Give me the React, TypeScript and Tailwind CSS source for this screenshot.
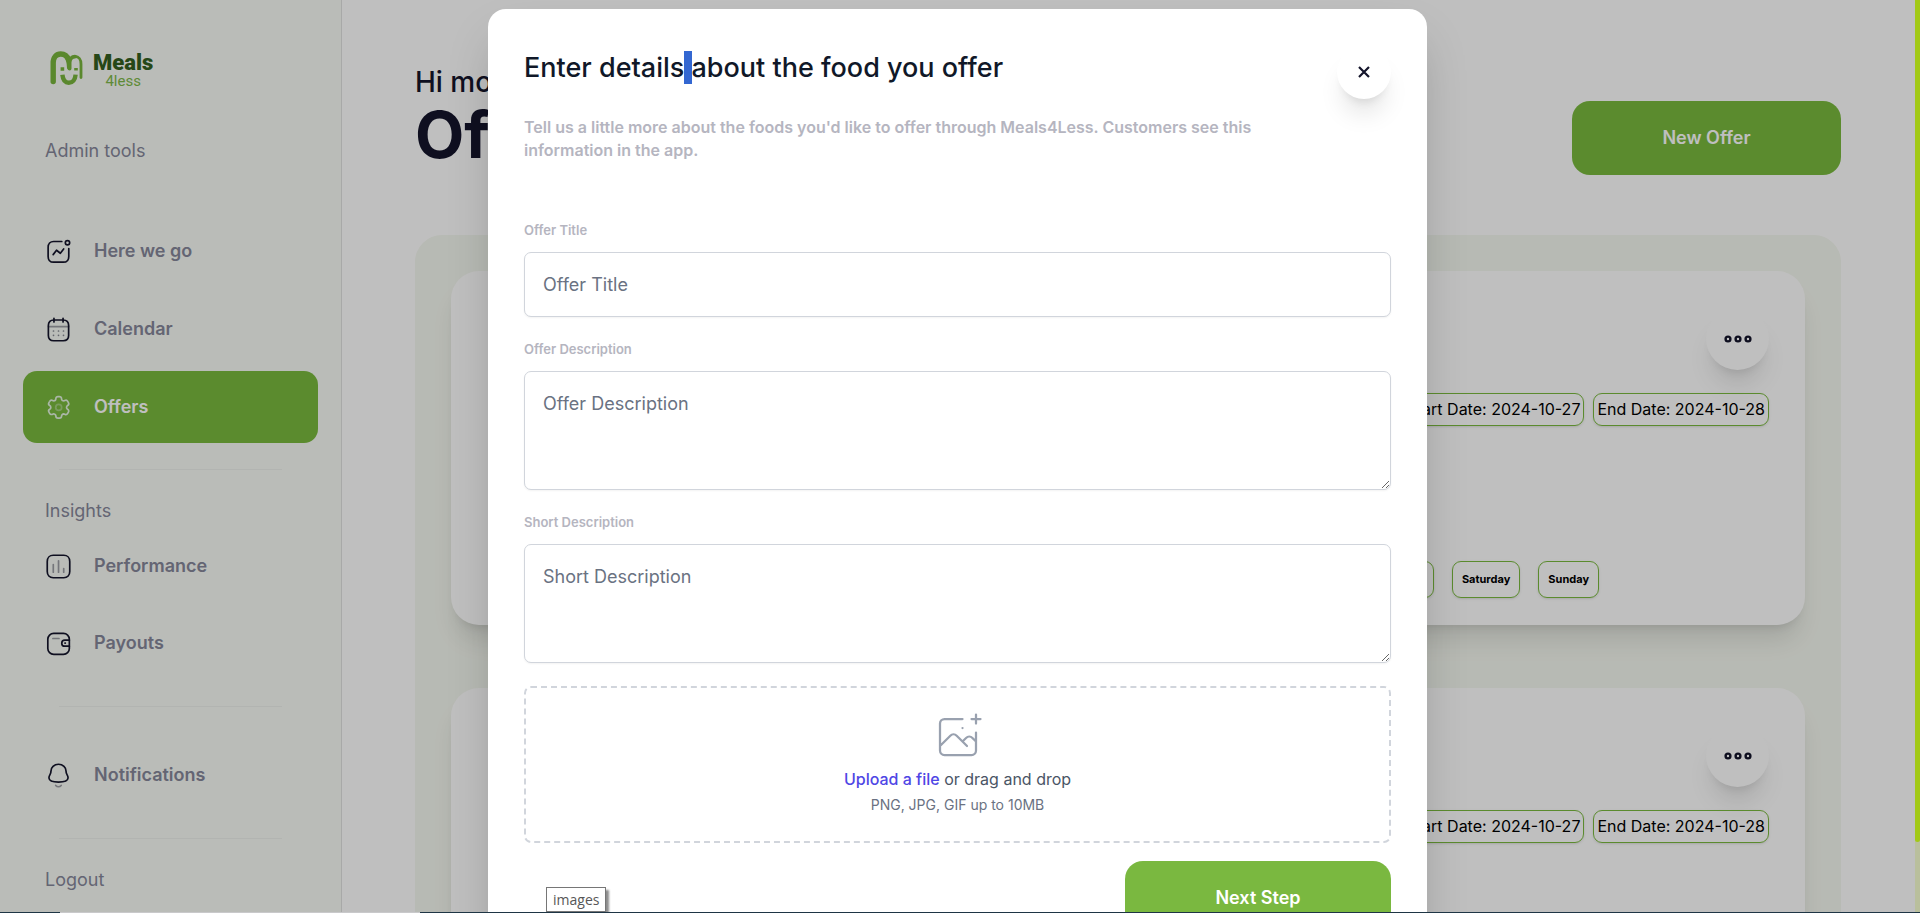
import type { ReactNode } from 'react';

interface NavItemProps {
  label: string;
  icon: ReactNode;
  active?: boolean;
}

const days = ['Friday', 'Saturday', 'Sunday'];

const offers = [
  { id: 1, start: '2024-10-27', end: '2024-10-28' },
  { id: 2, start: '2024-10-27', end: '2024-10-28' },
];

function Icon({ children }: { children: ReactNode }) {
  return (
    <svg
      className="h-[27px] w-[27px] shrink-0"
      viewBox="0 0 24 24"
      fill="none"
      stroke="currentColor"
      strokeWidth="1.5"
      strokeLinecap="round"
      strokeLinejoin="round"
      aria-hidden="true"
    >
      {children}
    </svg>
  );
}

const ActivityIcon = () => (
  <Icon>
    <path d="M7.245 14.781L10.238 10.891L13.652 13.573L16.581 9.793" />
    <circle cx="19.995" cy="4.2" r="1.922" />
    <path d="M14.925 3.12H7.657C4.645 3.12 2.778 5.253 2.778 8.265V16.347C2.778 19.358 4.608 21.482 7.657 21.482H16.261C19.273 21.482 21.141 19.358 21.141 16.347V9.308" />
  </Icon>
);

const CalendarIcon = () => (
  <Icon>
    <path opacity="0.4" d="M3.093 9.404H20.918" />
    <path
      opacity="0.5"
      d="M16.442 13.31H16.451M12.005 13.31H12.014M7.558 13.31H7.567M16.442 17.196H16.451M12.005 17.196H12.014M7.558 17.196H7.567"
    />
    <path d="M16.044 2V5.291M7.966 2V5.291" />
    <path d="M16.238 3.58H7.771C4.834 3.58 3 5.215 3 8.222V17.272C3 20.326 4.834 22 7.771 22H16.229C19.175 22 21 20.355 21 17.348V8.222C21.009 5.215 19.184 3.58 16.238 3.58Z" />
  </Icon>
);

const SettingIcon = () => (
  <Icon>
    <path d="M20.807 7.624L20.184 6.543C19.657 5.628 18.488 5.312 17.572 5.837C17.136 6.094 16.616 6.167 16.126 6.04C15.636 5.913 15.217 5.596 14.961 5.16C14.796 4.883 14.708 4.567 14.704 4.244C14.719 3.728 14.524 3.227 14.163 2.856C13.803 2.486 13.308 2.277 12.79 2.277H11.535C11.028 2.277 10.542 2.479 10.184 2.838C9.826 3.198 9.626 3.685 9.629 4.192C9.613 5.24 8.759 6.081 7.711 6.081C7.388 6.078 7.072 5.989 6.794 5.824C5.879 5.3 4.711 5.616 4.183 6.531L3.515 7.624C2.988 8.538 3.3 9.706 4.211 10.236C4.804 10.578 5.169 11.211 5.169 11.895C5.169 12.579 4.804 13.212 4.211 13.554C3.301 14.081 2.988 15.246 3.515 16.156L4.147 17.246C4.395 17.693 4.811 18.023 5.303 18.163C5.795 18.302 6.322 18.241 6.769 17.991C7.208 17.735 7.731 17.665 8.222 17.796C8.713 17.927 9.131 18.249 9.383 18.69C9.549 18.969 9.638 19.285 9.641 19.609C9.641 20.666 10.498 21.523 11.555 21.523H12.81C13.863 21.523 14.719 20.671 14.724 19.618C14.722 19.109 14.923 18.621 15.282 18.261C15.642 17.902 16.13 17.701 16.638 17.703C16.96 17.712 17.275 17.8 17.555 17.96C18.467 18.486 19.633 18.174 20.163 17.264L20.807 16.156C21.062 15.719 21.132 15.198 21.002 14.709C20.872 14.22 20.552 13.803 20.114 13.551C19.675 13.3 19.355 12.883 19.225 12.393C19.095 11.904 19.166 11.383 19.421 10.946C19.587 10.656 19.827 10.415 20.114 10.252C21.019 9.722 21.33 8.561 20.807 7.652Z" />
    <circle opacity="0.4" cx="12.175" cy="11.889" r="2.636" />
  </Icon>
);

const ChartIcon = () => (
  <Icon>
    <path opacity="0.4" d="M7.371 10.202V17.062M12.038 6.919V17.062M16.629 13.827V17.062" />
    <path d="M16.686 2H7.314C4.048 2 2 4.312 2 7.585V16.415C2 19.688 4.038 22 7.314 22H16.686C19.962 22 22 19.688 22 16.415V7.585C22 4.312 19.962 2 16.686 2Z" />
  </Icon>
);

const WalletIcon = () => (
  <Icon>
    <path d="M21.639 14.396H17.591C16.105 14.395 14.9 13.191 14.899 11.705C14.899 10.218 16.105 9.014 17.591 9.013H21.639M18.049 11.643H17.737" />
    <path d="M7.748 3H16.391C19.29 3 21.639 5.35 21.639 8.248V16.425C21.639 19.323 19.29 21.673 16.391 21.673H7.748C4.85 21.673 2.5 19.323 2.5 16.425V8.248C2.5 5.35 4.85 3 7.748 3Z" />
    <path opacity="0.4" d="M7.036 7.538H12.435" />
  </Icon>
);

const BellIcon = () => (
  <Icon>
    <path d="M12 17.848C17.639 17.848 20.248 17.124 20.5 14.22C20.5 11.317 18.681 11.504 18.681 7.943C18.681 5.161 16.045 1.996 12 1.996S5.32 5.161 5.32 7.943C5.32 11.504 3.5 11.317 3.5 14.22C3.753 17.136 6.362 17.848 12 17.848Z" />
    <path opacity="0.4" d="M14.389 20.857C13.025 22.372 10.897 22.39 9.519 20.857" />
  </Icon>
);

function Logo() {
  return (
    <a href="#" className="flex items-start gap-[10px] pl-[27px]" aria-label="Meals 4less">
      <svg className="h-9 w-[33px]" viewBox="0 0 33 36" fill="none" stroke="#79b63c" strokeLinecap="round">
        <path strokeWidth="5.4" d="M3.2 30.5V12C3.2 6 6.5 3 10.7 3C14.5 3 17.4 5.4 18.6 9" />
        <path strokeWidth="3.8" d="M19.6 17.5V11.5C19.6 8 21.8 5.6 25 5.6" />
        <path strokeWidth="2.8" d="M25 5.4C28.8 5.4 31 8.5 31 13V26.5" />
        <path strokeWidth="3.6" d="M15.5 5C17.8 7.4 18.6 10 18.8 17" />
        <path strokeWidth="4.4" strokeLinecap="butt" d="M12.4 23.8C12.9 29 15.2 31.8 18.8 31.8C22.6 31.8 25.2 28.6 25.6 23.6" />
        <path strokeWidth="3.6" strokeLinecap="butt" d="M12.4 19.8V16.2M26 19.4V17" />
      </svg>
      <span className="flex flex-col items-center font-['Roboto',sans-serif]">
        <span className="text-[22px] leading-6 font-black text-[#335f20]">Meals</span>
        <span className="text-[15px] leading-3 text-[#7fb94a]">4less</span>
      </span>
    </a>
  );
}

function NavItem({ label, icon, active }: NavItemProps) {
  return (
    <a
      href="#"
      className={`flex h-[72px] items-center gap-[22px] rounded-[14px] px-[22px] text-lg font-semibold ${
        active ? 'bg-[#7aba3e] text-white' : 'text-[#86879a]'
      }`}
    >
      <span className={active ? 'text-[#e4f4e0]' : 'text-[#14152b]'}>{icon}</span>
      {label}
    </a>
  );
}

function Sidebar() {
  return (
    <aside className="flex w-[342px] shrink-0 flex-col border-r border-[#e0e2e0] bg-[#f8fbf6] px-[23px] pt-[51px] text-lg text-[#86879a]">
      <Logo />
      <p className="mt-[50px] px-[22px] leading-7">Admin tools</p>
      <nav className="mt-[50px] flex flex-col gap-1.5">
        <NavItem label="Here we go" icon={<ActivityIcon />} />
        <NavItem label="Calendar" icon={<CalendarIcon />} />
        <NavItem label="Offers" icon={<SettingIcon />} active />
      </nav>
      <hr className="mx-9 mt-[26px] border-[#eef1ec]" />
      <p className="mt-[27px] px-[22px] leading-7">Insights</p>
      <nav className="mt-[5px] flex flex-col gap-[5px]">
        <NavItem label="Performance" icon={<ChartIcon />} />
        <NavItem label="Payouts" icon={<WalletIcon />} />
      </nav>
      <hr className="mx-9 mt-[27px] border-[#eef1ec]" />
      <nav className="mt-8">
        <NavItem label="Notifications" icon={<BellIcon />} />
      </nav>
      <hr className="mx-9 mt-[27px] border-[#eef1ec]" />
      <a href="#" className="mt-[27px] px-[22px] leading-7">
        Logout
      </a>
    </aside>
  );
}

function OfferCard({ start, end }: { start: string; end: string }) {
  return (
    <article className="rounded-[28px] bg-white px-9 pt-9 pb-[27px] shadow-xl">
      <div className="flex justify-end">
        <button
          aria-label="Offer options"
          className="flex h-[63px] w-[63px] items-center justify-center rounded-full bg-white text-[#14152b] shadow-xl"
        >
          <svg className="h-2 w-7" viewBox="0 0 28 8" fill="none" stroke="currentColor" strokeWidth="2.4">
            <circle cx="4" cy="4" r="2.4" />
            <circle cx="14" cy="4" r="2.4" />
            <circle cx="24" cy="4" r="2.4" />
          </svg>
        </button>
      </div>
      <div className="mt-[23px] flex justify-end gap-[9px] text-base leading-[31px] text-black">
        <span className="rounded-[9px] border border-[#7aba3e] px-[3px] shadow-sm">Start Date: {start}</span>
        <span className="rounded-[9px] border border-[#7aba3e] px-[3px] shadow-sm">End Date: {end}</span>
      </div>
      <div className="mt-[135px] mr-[170px] flex justify-end gap-[18px] text-[11px] leading-[35px] font-bold text-black">
        {days.map((day) => (
          <span key={day} className="rounded-[9px] border border-[#7aba3e] px-[9px] shadow-sm">
            {day}
          </span>
        ))}
      </div>
    </article>
  );
}

function Offers() {
  return (
    <main className="min-w-0 flex-1 bg-white pt-[61px] pr-[74px] pl-[73px]">
      <header className="flex items-start justify-between text-[#14152b]">
        <div>
          <p className="text-[28px] leading-[42px] font-medium">Hi mo</p>
          <h1 className="text-[64px] leading-[64px] font-bold">Offers</h1>
        </div>
        <button className="mt-[40px] h-[74px] w-[269px] rounded-[18px] bg-[#7aba3e] text-lg font-semibold text-white">
          New Offer
        </button>
      </header>
      <section className="mt-[60px] flex flex-col gap-[63px] rounded-[27px] bg-[#f5f8f0] p-9">
        {offers.map((offer) => (
          <OfferCard key={offer.id} start={offer.start} end={offer.end} />
        ))}
      </section>
    </main>
  );
}

function OfferModal() {
  const label = 'mb-3 block text-[13px] leading-5 font-semibold text-[#b5b5c0]';
  const field =
    'block w-full rounded-[7px] border border-gray-300 bg-white p-[18px] text-lg leading-[27px] shadow-xs placeholder:text-gray-500';

  return (
    <div
      role="dialog"
      aria-modal="true"
      aria-labelledby="modal-title"
      className="w-[939px] rounded-[18px] bg-white p-9 shadow-2xl"
    >
      <div className="flex items-start gap-6">
        <div className="flex-1">
          <h2 id="modal-title" className="text-[27px] leading-[45px] font-medium text-gray-900">
            Enter details<span className="bg-[#3367d1]"> </span>about the food you offer
          </h2>
          <p className="mt-[26px] text-base leading-[23px] font-semibold text-[#b5b5c0]">
            Tell us a little more about the foods you'd like to offer through Meals4Less. Customers see this
            information in the app.
          </p>
        </div>
        <button
          aria-label="Close"
          className="flex h-[54px] w-[54px] items-center justify-center rounded-full bg-white text-[#14152b] shadow-xl"
        >
          <svg className="h-3 w-3" viewBox="0 0 12 12" fill="none" stroke="currentColor" strokeWidth="2.2">
            <path d="M1 1L11 11M11 1L1 11" />
          </svg>
        </button>
      </div>

      <form className="mt-[58px]">
        <label htmlFor="title" className={label}>
          Offer Title
        </label>
        <input id="title" type="text" placeholder="Offer Title" className={field} />

        <label htmlFor="description" className={`mt-[22px] ${label}`}>
          Offer Description
        </label>
        <textarea id="description" rows={3} placeholder="Offer Description" className={field} />

        <label htmlFor="short" className={`mt-[22px] ${label}`}>
          Short Description
        </label>
        <textarea id="short" rows={3} placeholder="Short Description" className={field} />

        {/* Image upload */}
        <div className="mt-[23px] flex flex-col items-center rounded-[7px] border-2 border-dashed border-gray-300 pt-[22px] pb-[27px]">
          <svg className="h-[54px] w-[54px] text-gray-400" viewBox="0 0 48 48" fill="none" stroke="currentColor">
            <path
              d="M28 8H12a4 4 0 00-4 4v20m32-12v8m0 0v8a4 4 0 01-4 4H12a4 4 0 01-4-4v-4m32-4l-3.172-3.172a4 4 0 00-5.656 0L28 28M8 32l9.172-9.172a4 4 0 015.656 0L28 28m0 0l4 4m4-24h8m-4-4v8m-12 4h.02"
              strokeWidth="2"
              strokeLinecap="round"
              strokeLinejoin="round"
            />
          </svg>
          <p className="mt-1 text-base leading-[22px] text-gray-600">
            <label htmlFor="images" className="font-medium text-[#4f46e5]">
              Upload a file
              <input id="images" type="file" className="sr-only" />
            </label>{' '}
            or drag and drop
          </p>
          <p className="mt-1.5 text-sm leading-[18px] text-gray-500">PNG, JPG, GIF up to 10MB</p>
        </div>

        <div className="mt-[18px] flex justify-end">
          <button
            type="button"
            className="h-[74px] w-[266px] rounded-[18px] bg-[#7ab840] text-lg font-semibold text-white"
          >
            Next Step
          </button>
        </div>
      </form>
    </div>
  );
}

export default function App() {
  return (
    <div className="flex h-screen flex-col overflow-hidden font-['Inter',sans-serif]">
      <div className="flex min-h-0 flex-1">
        <div className="relative flex min-w-0 flex-1 overflow-hidden">
          <Sidebar />
          <Offers />
          <div className="absolute inset-0 flex items-start justify-center overflow-hidden bg-black/25 pt-[9px]">
            <OfferModal />
          </div>
          <div
            role="tooltip"
            className="absolute bottom-0 left-[546px] border border-[#767676] bg-white px-1.5 font-['Open_Sans',sans-serif] text-sm leading-[23px] text-[#575757] shadow-[3px_3px_2px_rgba(0,0,0,0.45)]"
          >
            images
          </div>
        </div>
        {/* Page scrollbar */}
        <div className="w-[5px] bg-[#b9bf9c]">
          <div className="h-12/13 rounded-b-full bg-[#a2c916]" />
        </div>
      </div>
      <div className="flex h-px bg-[#1e3545]">
        <span className="ml-[60px] w-[360px] bg-[#c9c9cb]" />
      </div>
    </div>
  );
}
